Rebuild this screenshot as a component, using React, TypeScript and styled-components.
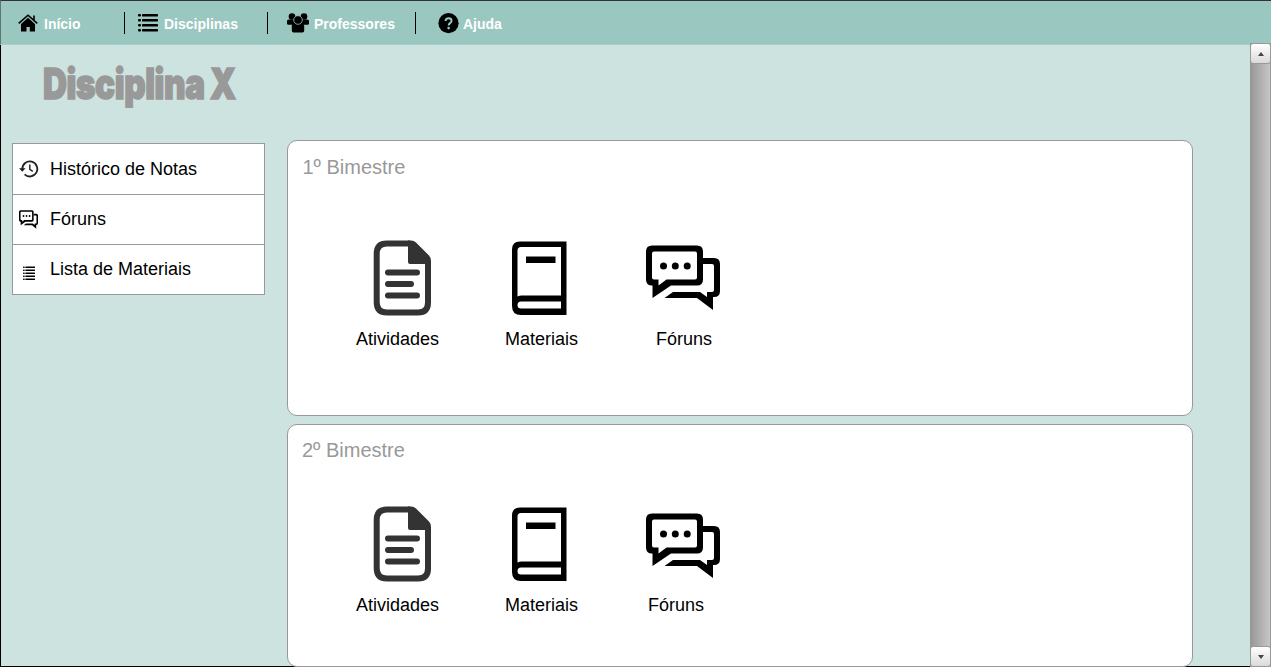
import React from "react";
import styled, { createGlobalStyle } from "styled-components";

const Global = createGlobalStyle`
  *, *::before, *::after { box-sizing: border-box; }
  body { margin: 0; background: #fff; font-family: "Liberation Sans", Arial, sans-serif; overflow: hidden; }
  svg { display: block; flex: none; }
`;

const Window = styled.div`
  width: 1271px;
  height: 667px;
  display: flex;
  flex-direction: column;
  background: #cde3df;
  border-bottom: 1px solid #000;
`;

const Header = styled.nav`
  height: 45px;
  flex: none;
  display: flex;
  align-items: flex-start;
  background: #9ac7c0;
  border-top: 1px solid #333;
  border-left: 1px solid #5c7773;
  border-bottom: 1px solid #a9cfc9;
`;

const NavItem = styled.a<{ $width: number; $pad: number; $divider?: boolean }>`
  width: ${(p) => p.$width}px;
  height: 22px;
  margin-top: 11px;
  padding-left: ${(p) => p.$pad}px;
  display: flex;
  align-items: center;
  border-right: ${(p) => (p.$divider ? "1px solid #000" : "none")};
`;

const NavLabel = styled.span<{ $gap: number }>`
  margin: 1px 0 0 ${(p) => p.$gap}px;
  color: #fff;
  font-size: 14px;
  font-weight: 700;
  line-height: 16px;
  white-space: nowrap;
`;

const Body = styled.div`
  flex: 1;
  min-height: 0;
  display: flex;
  border-left: 1px solid #000;
`;

const Content = styled.main`
  flex: 1;
  min-width: 0;
  display: flex;
  flex-direction: column;
`;

const Title = styled.h1`
  height: 95px;
  flex: none;
  margin: 0;
  padding: 13px 0 0 42px;
  color: #999;
  font-family: Impact, Inter, sans-serif;
  font-size: 42px;
  line-height: 52px;
  font-weight: 900;
  letter-spacing: -0.5px;
  word-spacing: -1px;
  white-space: nowrap;
  -webkit-text-stroke: 1.6px #999;
  transform: scaleX(0.79);
  transform-origin: 42px 0;
`;

const Columns = styled.div`
  flex: 1;
  min-height: 0;
  display: flex;
  align-items: flex-start;
`;

const Sidebar = styled.ul`
  width: 253px;
  margin: 3px 22px 0 11px;
  padding: 0;
  list-style: none;
  background: #fff;
  border: 1px solid #999;
`;

const SideRow = styled.li`
  height: 50px;
  padding-bottom: 1px;
  display: flex;
  align-items: center;
  color: #000;
  font-size: 18px;
  line-height: 20px;
  &:not(:last-child) { border-bottom: 1px solid #999; }
  &:first-child { height: 51px; }
  &:last-child { height: 49px; }
`;

const SideIcon = styled.span<{ $left: number; $top: number }>`
  width: 37px;
  padding: ${(p) => p.$top}px 0 0 ${(p) => p.$left}px;
`;

const Cards = styled.div`
  width: 906px;
  display: flex;
  flex-direction: column;
  gap: 8px;
`;

const Card = styled.section<{ $height: number; $top: number; $left: number }>`
  height: ${(p) => p.$height}px;
  padding: ${(p) => p.$top}px 0 0 ${(p) => p.$left}px;
  background: #fff;
  border: 1px solid #999;
  border-radius: 10px;
`;

const CardTitle = styled.h2`
  margin: 0;
  color: #999;
  font-size: 20px;
  line-height: 24px;
  font-weight: 400;
`;

const Tiles = styled.div<{ $top: number; $left: number }>`
  display: flex;
  padding: ${(p) => p.$top}px 0 0 ${(p) => p.$left}px;
`;

const Tile = styled.div<{ $width: number }>`
  width: ${(p) => p.$width}px;
`;

const TileIcon = styled.div<{ $top: number; $left: number }>`
  height: 88px;
  padding: ${(p) => p.$top}px 0 0 ${(p) => p.$left}px;
`;

const TileLabel = styled.div<{ $left?: number }>`
  padding-left: ${(p) => p.$left ?? 0}px;
  color: #000;
  font-size: 18px;
  line-height: 22px;
`;

const Scrollbar = styled.div`
  width: 21px;
  margin: -2px 0 -1px;
  display: flex;
  flex-direction: column;
  justify-content: space-between;
  background: linear-gradient(90deg, #969696, #c6c6c6);
  border-right: 1px solid #999;
`;

const ScrollButton = styled.div`
  height: 21px;
  width: 21px;
  display: flex;
  align-items: center;
  justify-content: center;
  background: linear-gradient(#fff, #dadada);
  border: 1px solid #999;
  border-radius: 3px;
`;

const HomeIcon = () => (
  <svg width="20" height="18" viewBox="0 0 20 18">
    <path d="M3 10 10 3.8 17 10v7.500h-5.200v-4.500H8.500v4.500H3z" />
    <path d="M.7 9.400 10 1.200l9.300 8.200M16 1.500v5" fill="none" stroke="#000" strokeWidth="1.6" />
  </svg>
);

const ListIcon = ({ width, height, rows }: { width: number; height: number; rows: number }) => {
  const step = 20 / rows;
  return (
    <svg width={width} height={height} viewBox="0 0 20 20" preserveAspectRatio="none">
      {Array.from({ length: rows }, (_, i) => (
        <g key={i}>
          <rect x="0" y={i * step + step * 0.2} width="3" height={step * 0.5} rx="1" />
          <rect x="4" y={i * step + step * 0.2} width="16" height={step * 0.5} rx=".4" />
        </g>
      ))}
    </svg>
  );
};

const PeopleIcon = () => (
  <svg width="22" height="20" viewBox="0 0 22 20">
    <circle cx="5" cy="3.500" r="3.300" />
    <circle cx="17" cy="3.500" r="3.300" />
    <path d="M0 8q0-1.500 1.800-1.500h18.400Q22 6.500 22 8v2.500q0 1.300-1.500 1.300h-19Q0 11.800 0 10.500z" />
    <path d="M4.800 13q0-2.500 2.500-2.500h7.400q2.500 0 2.500 2.500v4.700q0 1.800-1.800 1.800H6.600q-1.800 0-1.800-1.800z" />
    <circle cx="11" cy="7" r="4.300" stroke="#9ac7c0" strokeWidth=".8" />
  </svg>
);

const HelpIcon = () => (
  <svg width="21" height="21" viewBox="0 0 21 21">
    <circle cx="10.500" cy="10.200" r="10.100" />
    <path d="M7.600 8q0-2.700 3-2.700t3 2.500q0 1.400-1.500 2.300-1.400.8-1.400 2.300" fill="none" stroke="#9ac7c0" strokeWidth="1.900" />
    <circle cx="10.600" cy="15.100" r="1.300" fill="#9ac7c0" />
  </svg>
);

const HistoryIcon = () => (
  <svg width="20" height="18" viewBox="0 0 20 18" fill="none" stroke="#222" strokeWidth="1.8">
    <path d="M3.300 9a7.500 7.500 0 1 1 2.300 5.400" />
    <path d="M10.800 4.600v4.700l3 2" strokeWidth="1.400" />
    <path d="M0 8.300h6.600L3.300 11.800z" fill="#222" stroke="none" />
  </svg>
);

const ForumIcon = ({ width, height }: { width: number; height: number }) => (
  <svg width={width} height={height} viewBox="0 0 74 66" preserveAspectRatio="none">
    <path
      d="M6 .5h45q6 0 6 6v28q0 6-6 6H25L6.500 53V40.500H6q-6 0-6-6v-28q0-6 6-6zM6 8.500v24q0 2 2 2h4.500v6l8-6H49q2 0 2-2v-24q0-2-2-2H8q-2 0-2 2z"
      fillRule="evenodd"
    />
    <path d="M57 13h11q6 0 6 6v27q0 6-6 6h-1v13L51 53H18.500l8.500-6h27l7 5v-5h5q2 0 2-2V21q0-2-2-2h-9z" />
    <circle cx="17.500" cy="21" r="3.500" />
    <circle cx="29.300" cy="21" r="3.500" />
    <circle cx="41.200" cy="21" r="3.500" />
  </svg>
);

const DocumentIcon = () => (
  <svg width="59" height="76" viewBox="0 0 59 76" fill="none" stroke="#333" strokeWidth="6">
    <path d="M37 3.500H14q-10.300 0-10.300 10.300v48.400Q3.700 72.500 14 72.500h31q10 0 10-10V24" />
    <path d="M35 .5h3q3 0 5 2L56 15.500q2 2 2 5.500v5q-2-2-5-2H37q-2 0-2-2z" fill="#333" stroke="none" />
    <path d="M15 32.500h29M15 44h23M15 55.500h29" strokeLinecap="round" />
  </svg>
);

const BookIcon = () => (
  <svg width="55" height="74" viewBox="0 0 55 74">
    <path
      d="M8 .5h46.500v73.500H9q-9 0-9-9V8.500q0-8 8-8zM9 6q-3.500 0-3.500 3.500v46q2-1 4-1h39.500V6zM9 60.500q-3.500 0-3.500 3.500T9 67.500h40v-7z"
      fillRule="evenodd"
    />
    <path d="M14 15.500h29.500V22H14z" />
  </svg>
);

const Arrow = ({ up }: { up?: boolean }) => (
  <svg width="6" height="4" viewBox="0 0 6 4">
    <path d={up ? "M0 4 3 0l3 4z" : "M0 0h6L3 4z"} fill="#444" />
  </svg>
);

function Bimester(p: {
  title: string; height: number; top: number; left: number;
  tilesTop: number; tilesLeft: number; forumTop: number; forumLabel: number;
}) {
  return (
    <Card $height={p.height} $top={p.top} $left={p.left}>
      <CardTitle>{p.title}</CardTitle>
      <Tiles $top={p.tilesTop} $left={p.tilesLeft}>
        <Tile $width={149}>
          <TileIcon $top={0} $left={17}><DocumentIcon /></TileIcon>
          <TileLabel>Atividades</TileLabel>
        </Tile>
        <Tile $width={141}>
          <TileIcon $top={1} $left={7}><BookIcon /></TileIcon>
          <TileLabel>Materiais</TileLabel>
        </Tile>
        <Tile $width={80}>
          <TileIcon $top={p.forumTop} $left={0}><ForumIcon width={74} height={66} /></TileIcon>
          <TileLabel $left={p.forumLabel}>Fóruns</TileLabel>
        </Tile>
      </Tiles>
    </Card>
  );
}

export default function App() {
  return (
    <>
      <Global />
      <Window>
        <Header>
          <NavItem $width={124} $pad={17} $divider>
            <HomeIcon /><NavLabel $gap={6}>Início</NavLabel>
          </NavItem>
          <NavItem $width={143} $pad={13} $divider>
            <ListIcon width={20} height={20} rows={4} /><NavLabel $gap={6}>Disciplinas</NavLabel>
          </NavItem>
          <NavItem $width={148} $pad={19} $divider>
            <PeopleIcon /><NavLabel $gap={5}>Professores</NavLabel>
          </NavItem>
          <NavItem $width={120} $pad={22}>
            <HelpIcon /><NavLabel $gap={4}>Ajuda</NavLabel>
          </NavItem>
        </Header>
        <Body>
          <Content>
            <Title>Disciplina X</Title>
            <Columns>
              <Sidebar>
                <SideRow>
                  <SideIcon $left={6} $top={0}><HistoryIcon /></SideIcon>Histórico de Notas
                </SideRow>
                <SideRow>
                  <SideIcon $left={6} $top={0}><ForumIcon width={19} height={19} /></SideIcon>Fóruns
                </SideRow>
                <SideRow>
                  <SideIcon $left={10} $top={9}><ListIcon width={12} height={15} rows={5} /></SideIcon>Lista de Materiais
                </SideRow>
              </Sidebar>
              <Cards>
                <Bimester title="1º Bimestre" height={276} top={14} left={14.5} tilesTop={61} tilesLeft={53.5} forumTop={5} forumLabel={10} />
                <Bimester title="2º Bimestre" height={243} top={13} left={14} tilesTop={44} tilesLeft={54} forumTop={7} forumLabel={2} />
              </Cards>
            </Columns>
          </Content>
          <Scrollbar>
            <ScrollButton><Arrow up /></ScrollButton>
            <ScrollButton><Arrow /></ScrollButton>
          </Scrollbar>
        </Body>
      </Window>
    </>
  );
}
